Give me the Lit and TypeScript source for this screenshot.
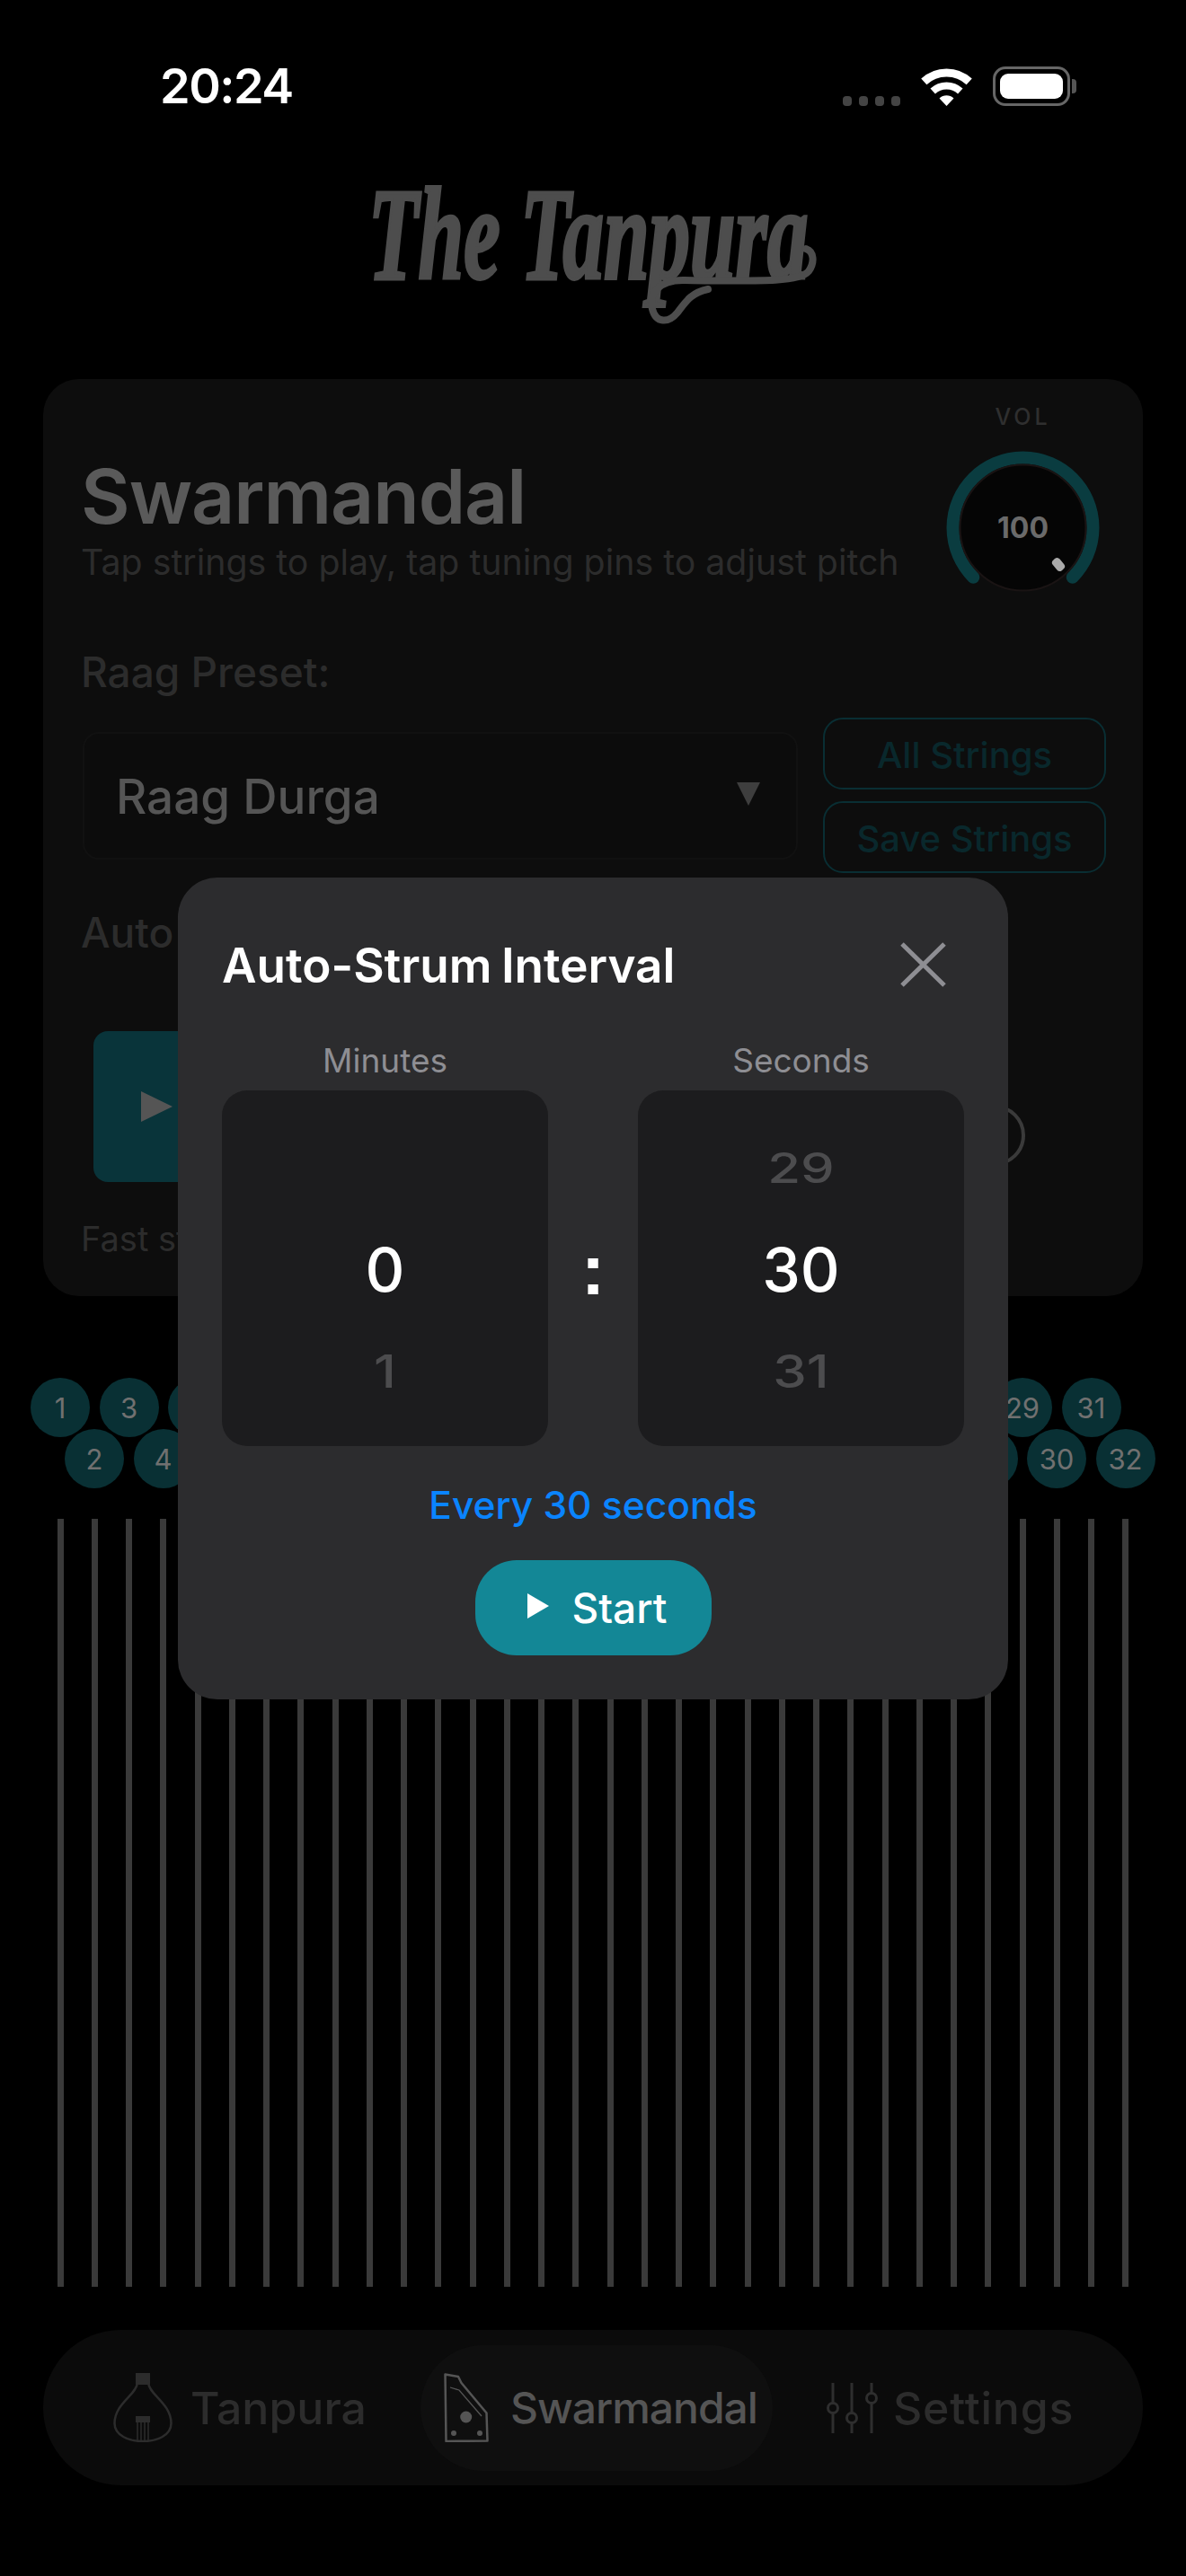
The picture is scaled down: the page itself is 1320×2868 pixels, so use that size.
import { LitElement, html, css, svg } from 'lit';
import { customElement } from 'lit/decorators.js';

const ODD = Array.from({ length: 16 }, (_, i) => i * 2 + 1);
const EVEN = Array.from({ length: 16 }, (_, i) => i * 2 + 2);
const STRINGS = Array.from({ length: 32 }, (_, i) => i);

const wifiIcon = svg`
  <path d="M3.3 14.9A37 37 0 0 1 53.7 14.9" fill="none" stroke="#fff" stroke-width="9" />
  <path d="M13.2 25.5A22.5 22.5 0 0 1 43.8 25.5" fill="none" stroke="#fff" stroke-width="8" />
  <path d="M28.5 42L20.5 33.5A11.5 11.5 0 0 1 36.5 33.5Z" fill="#fff" />
`;

const tanpuraIcon = svg`
  <rect x="25" y="0" width="16" height="13" fill="#2c2c2c" />
  <path d="M27 11C26 24 1.5 34 1.5 56C1.5 70 18 76 33 76C48 76 64.5 70 64.5 56C64.5 34 40 24 39 11" fill="none" stroke="#2c2c2c" stroke-width="2.5" />
  <rect x="25" y="48" width="16" height="7" fill="#2c2c2c" />
  <path d="M27 55V75M31 55V76M35 55V76M39 55V75" stroke="#2c2c2c" stroke-width="1.5" />
`;

const swarmandalIcon = svg`
  <path d="M1.5 1.5L16 4L19.5 11L47.5 44.5L48.5 75.5L2.5 76Z" fill="none" stroke="#555" stroke-width="2.5" stroke-linejoin="round" />
  <path d="M7 16L17 19L42 48" fill="none" stroke="#555" stroke-width="1.3" />
  <circle cx="24.7" cy="49" r="6.5" fill="#555" />
  <circle cx="11" cy="67" r="3" fill="#555" />
  <circle cx="40" cy="67" r="3" fill="#555" />
`;

const settingsIcon = svg`
  <path d="M7 0V56M28 0V56M50 0V56" stroke="#2e2e2e" stroke-width="3" />
  <circle cx="7" cy="28" r="5.5" fill="#0b0b0b" stroke="#2e2e2e" stroke-width="3" />
  <circle cx="28" cy="39" r="5.5" fill="#0b0b0b" stroke="#2e2e2e" stroke-width="3" />
  <circle cx="50" cy="17" r="5.5" fill="#0b0b0b" stroke="#2e2e2e" stroke-width="3" />
`;

@customElement('app-root')
export class AppRoot extends LitElement {
  static styles = css`
    :host {
      display: block;
      position: relative;
      width: 1320px;
      height: 2868px;
      overflow: hidden;
      background: #000;
      font-family: Inter, 'Liberation Sans', sans-serif;
    }

    .status {
      display: flex;
      align-items: flex-end;
      justify-content: space-between;
      height: 44px;
      padding: 74px 122px 0 178px;
    }

    .time {
      font-size: 54px;
      line-height: 44px;
      font-weight: 600;
      color: #fff;
      letter-spacing: -1.5px;
    }

    .status-right {
      display: flex;
      align-items: flex-end;
    }

    .dots {
      display: flex;
      gap: 8px;
      margin-right: 23px;
    }

    .dots span {
      width: 10px;
      height: 11px;
      border-radius: 4px;
      background: #444;
    }

    .wifi {
      width: 57px;
      height: 42px;
      margin-right: 23px;
    }

    .battery {
      display: flex;
      align-items: center;
    }

    .battery-body {
      box-sizing: border-box;
      width: 86px;
      height: 44px;
      padding: 5px;
      border: 3px solid #666;
      border-radius: 14px;
    }

    .battery-body div {
      height: 100%;
      border-radius: 9px;
      background: #fff;
    }

    .battery-nub {
      width: 5px;
      height: 16px;
      margin-left: 2px;
      border-radius: 0 4px 4px 0;
      background: #555;
    }

    .logo-wrap {
      display: flex;
      justify-content: center;
      height: 304px;
    }

    .logo {
      position: relative;
      width: 500px;
      height: 190px;
      margin-top: 90px;
    }

    .logo-text {
      width: 800px;
      margin-top: -22px;
      transform: scaleX(0.623);
      transform-origin: 0 0;
      font-family: 'Liberation Serif', serif;
      font-size: 146px;
      line-height: 150px;
      font-weight: 700;
      font-style: italic;
      color: #4d4d4d;
      white-space: nowrap;
      -webkit-text-stroke: 4px #4d4d4d;
    }

    .logo-swash {
      position: absolute;
      left: 0;
      top: 0;
      width: 500px;
      height: 190px;
      overflow: visible;
    }

    .card {
      box-sizing: border-box;
      position: relative;
      height: 1021px;
      margin: 0 48px;
      padding: 0 41px 0 42px;
      border-radius: 40px;
      background: #0d0d0d;
    }

    .head {
      display: flex;
      justify-content: space-between;
      height: 301px;
    }

    .title {
      margin-top: 85px;
      font-size: 84px;
      line-height: 92px;
      font-weight: 600;
      color: #5a5a5a;
      letter-spacing: -1px;
    }

    .sub {
      margin-top: 2px;
      font-size: 39.3px;
      line-height: 50px;
      color: #2c2c2c;
    }

    .vol {
      display: flex;
      flex-direction: column;
      align-items: center;
      width: 171px;
      margin-right: 7px;
      padding-top: 29px;
    }

    .vol-label {
      height: 27px;
      font-size: 25px;
      line-height: 27px;
      font-weight: 500;
      letter-spacing: 4px;
      color: #2f2f2f;
    }

    .knob {
      width: 171px;
      height: 171px;
      margin-top: 24px;
    }

    .label {
      font-size: 46px;
      line-height: 50px;
      font-weight: 500;
      color: #2c2c2c;
    }

    .preset-row {
      display: flex;
      gap: 28px;
      align-items: center;
      margin-top: 26px;
      margin-left: 2px;
    }

    .select {
      box-sizing: border-box;
      display: flex;
      flex: 1;
      align-items: center;
      justify-content: space-between;
      height: 142px;
      padding: 2px 40px 0 35px;
      border: 2px solid #111;
      border-radius: 18px;
      background: #0c0c0c;
      font-size: 53px;
      font-weight: 500;
      color: #555;
    }

    .caret {
      width: 0;
      height: 0;
      margin-top: -6px;
      border-top: 26px solid #3e3e3e;
      border-left: 13px solid transparent;
      border-right: 13px solid transparent;
    }

    .preset-btns {
      display: flex;
      flex-direction: column;
      gap: 13px;
      width: 315px;
    }

    .outline-btn {
      box-sizing: border-box;
      display: flex;
      align-items: center;
      justify-content: center;
      height: 80px;
      padding-top: 2px;
      border: 2.5px solid #092e33;
      border-radius: 22px;
      font-size: 40px;
      font-weight: 500;
      color: #09282c;
    }

    .auto-label {
      margin-top: 41px;
    }

    .auto-row {
      display: flex;
      justify-content: space-between;
      margin-top: 85px;
      margin-left: 14px;
    }

    .auto-btn {
      display: flex;
      align-items: center;
      width: 300px;
      height: 168px;
      padding-left: 53px;
      border-radius: 16px;
      background: #09343a;
    }

    .auto-play {
      width: 0;
      height: 0;
      border-left: 35px solid #555;
      border-top: 17px solid transparent;
      border-bottom: 17px solid transparent;
    }

    .ring {
      box-sizing: border-box;
      align-self: flex-end;
      width: 68px;
      height: 68px;
      margin: 0 90px 18px 0;
      border: 4px solid #3a3a3a;
      border-radius: 50%;
    }

    .hint {
      margin-top: 40px;
      font-size: 38px;
      line-height: 46px;
      color: #2c2c2c;
    }

    .pins {
      padding-top: 91px;
    }

    .pin-row {
      display: flex;
      gap: 10.5px;
      padding-left: 34px;
    }

    .pin-row.even {
      margin-top: -9px;
      padding-left: 72px;
    }

    .pin {
      display: flex;
      flex: none;
      align-items: center;
      justify-content: center;
      width: 66px;
      height: 66px;
      border-radius: 50%;
      background: #093034;
      font-size: 31px;
      color: #707070;
    }

    .strings {
      display: flex;
      gap: 31.26px;
      height: 855px;
      margin-top: 34px;
      padding-left: 63.5px;
    }

    .string {
      flex: none;
      width: 7px;
      background: #3a3a3a;
    }

    .nav {
      box-sizing: border-box;
      position: relative;
      height: 173px;
      margin: 48px 48px 0;
      border-radius: 87px;
      background: #0b0b0b;
    }

    .nav-items {
      display: flex;
      align-items: center;
      height: 100%;
      padding-left: 78px;
    }

    .nav-item {
      display: flex;
      align-items: center;
      font-size: 50px;
      font-weight: 500;
      color: #2c2c2c;
    }

    .nav-item svg {
      flex: none;
    }

    .nav-item.tanpura svg {
      width: 66px;
      height: 77px;
      margin-right: 20px;
    }

    .nav-item.swar {
      box-sizing: border-box;
      flex: none;
      width: 392px;
      height: 140px;
      margin-left: 60px;
      padding-left: 26px;
      border-radius: 70px;
      background: #0f0f0f;
      font-size: 48px;
      letter-spacing: -1px;
      color: #555;
    }

    .nav-item.swar svg {
      width: 50px;
      height: 77px;
      margin-right: 24px;
    }

    .nav-item.settings {
      margin-left: 60px;
      letter-spacing: 0.8px;
    }

    .nav-item.settings svg {
      width: 57px;
      height: 56px;
      margin-right: 17px;
    }

    .modal {
      box-sizing: border-box;
      position: absolute;
      left: 198px;
      top: 977px;
      width: 924px;
      height: 915px;
      padding: 0 49px;
      border-radius: 44px;
      background: #2c2c2e;
    }

    .modal-head {
      box-sizing: border-box;
      display: flex;
      align-items: center;
      justify-content: space-between;
      height: 183px;
      padding: 13px 20px 0 0;
    }

    .modal-title {
      font-size: 53px;
      line-height: 64px;
      font-weight: 600;
      word-spacing: -3px;
      color: #fff;
    }

    .close {
      width: 51px;
      height: 50px;
      margin-top: -2px;
    }

    .wheels {
      display: grid;
      grid-template-columns: 363px 1fr 363px;
    }

    .wheel-label {
      height: 54px;
      font-size: 37px;
      line-height: 41px;
      text-align: center;
      color: #8e8e93;
    }

    .wheel {
      box-sizing: border-box;
      display: flex;
      flex-direction: column;
      justify-content: center;
      height: 396px;
      padding-top: 3px;
      border-radius: 28px;
      background: #1c1c1e;
    }

    .wheel div {
      height: 113px;
      font-size: 68px;
      line-height: 113px;
      font-weight: 500;
      text-align: center;
      color: #fff;
    }

    .wheel .above {
      color: #4c4c4e;
      transform: scale(0.88, 0.68);
    }

    .wheel .below {
      color: #4c4c4e;
      transform: scale(0.88, 0.74);
    }

    .colon {
      padding-top: 212px;
      font-family: 'Liberation Sans', sans-serif;
      font-size: 80px;
      line-height: 84px;
      font-weight: 700;
      text-align: center;
      color: #fff;
    }

    .every {
      margin-top: 41px;
      font-size: 42.5px;
      line-height: 50px;
      font-weight: 500;
      text-align: center;
      color: #0a84ff;
    }

    .start {
      display: flex;
      align-items: center;
      box-sizing: border-box;
      width: 263px;
      height: 106px;
      margin: 36px auto 0;
      padding-left: 58px;
      border-radius: 46px;
      background: #138796;
      font-size: 46px;
      font-weight: 500;
      color: #fff;
    }

    .start-play {
      width: 0;
      height: 0;
      margin-right: 26px;
      margin-top: -4px;
      border-left: 24px solid #fff;
      border-top: 14px solid transparent;
      border-bottom: 14px solid transparent;
    }
  `;

  render() {
    return html`
      <div class="status">
        <div class="time">20:24</div>
        <div class="status-right">
          <div class="dots"><span></span><span></span><span></span><span></span></div>
          <svg class="wifi" viewBox="0 0 57 42">${wifiIcon}</svg>
          <div class="battery">
            <div class="battery-body"><div></div></div>
            <div class="battery-nub"></div>
          </div>
        </div>
      </div>

      <div class="logo-wrap">
        <div class="logo">
          <div class="logo-text">The Tanpura</div>
          <svg class="logo-swash" viewBox="0 0 500 190">
            <path
              d="M487 69C496 72 497 84 490 94C480 106 440 105 350 104C322 104 312 120 316 136C320 152 334 152 344 140C352 130 358 118 378 114"
              fill="none"
              stroke="#4d4d4d"
              stroke-width="8"
              stroke-linecap="round"
            />
          </svg>
        </div>
      </div>

      <div class="card">
        <div class="head">
          <div>
            <div class="title">Swarmandal</div>
            <div class="sub">Tap strings to play, tap tuning pins to adjust pitch</div>
          </div>
          <div class="vol">
            <div class="vol-label">VOL</div>
            <svg class="knob" viewBox="0 0 171 171">
              <path d="M30.3 140.7A78 78 0 1 1 140.7 140.7" fill="none" stroke="#0a3c40" stroke-width="14" stroke-linecap="round" />
              <circle cx="85.5" cy="85.5" r="70" fill="#050505" stroke="#1a1414" stroke-width="2" />
              <text x="85.5" y="97" text-anchor="middle" font-size="32" font-weight="700" fill="#6a6a6a">100</text>
              <rect x="120" y="119" width="10" height="15" rx="4" fill="#aaa" transform="rotate(-40 125 126.5)" />
            </svg>
          </div>
        </div>

        <div class="label">Raag Preset:</div>
        <div class="preset-row">
          <div class="select">
            <span>Raag Durga</span>
            <span class="caret"></span>
          </div>
          <div class="preset-btns">
            <div class="outline-btn">All Strings</div>
            <div class="outline-btn">Save Strings</div>
          </div>
        </div>

        <div class="label auto-label">Auto Strum:</div>
        <div class="auto-row">
          <div class="auto-btn"><span class="auto-play"></span></div>
          <div class="ring"></div>
        </div>
        <div class="hint">Fast strum</div>
      </div>

      <div class="pins">
        <div class="pin-row">${ODD.map((n) => html`<div class="pin">${n}</div>`)}</div>
        <div class="pin-row even">${EVEN.map((n) => html`<div class="pin">${n}</div>`)}</div>
      </div>

      <div class="strings">${STRINGS.map(() => html`<div class="string"></div>`)}</div>

      <div class="nav">
        <div class="nav-items">
          <div class="nav-item tanpura">
            <svg viewBox="0 0 66 77">${tanpuraIcon}</svg>
            Tanpura
          </div>
          <div class="nav-item swar">
            <svg viewBox="0 0 50 77">${swarmandalIcon}</svg>
            Swarmandal
          </div>
          <div class="nav-item settings">
            <svg viewBox="0 0 57 56">${settingsIcon}</svg>
            Settings
          </div>
        </div>
      </div>

      <div class="modal">
        <div class="modal-head">
          <div class="modal-title">Auto-Strum Interval</div>
          <svg class="close" viewBox="0 0 51 50">
            <path d="M2 2L49 48M49 2L2 48" stroke="#8e8e93" stroke-width="5" />
          </svg>
        </div>
        <div class="wheels">
          <div>
            <div class="wheel-label">Minutes</div>
            <div class="wheel">
              <div></div>
              <div>0</div>
              <div class="below">1</div>
            </div>
          </div>
          <div class="colon">:</div>
          <div>
            <div class="wheel-label">Seconds</div>
            <div class="wheel">
              <div class="above">29</div>
              <div>30</div>
              <div class="below">31</div>
            </div>
          </div>
        </div>
        <div class="every">Every 30 seconds</div>
        <div class="start"><span class="start-play"></span>Start</div>
      </div>
    `;
  }
}
